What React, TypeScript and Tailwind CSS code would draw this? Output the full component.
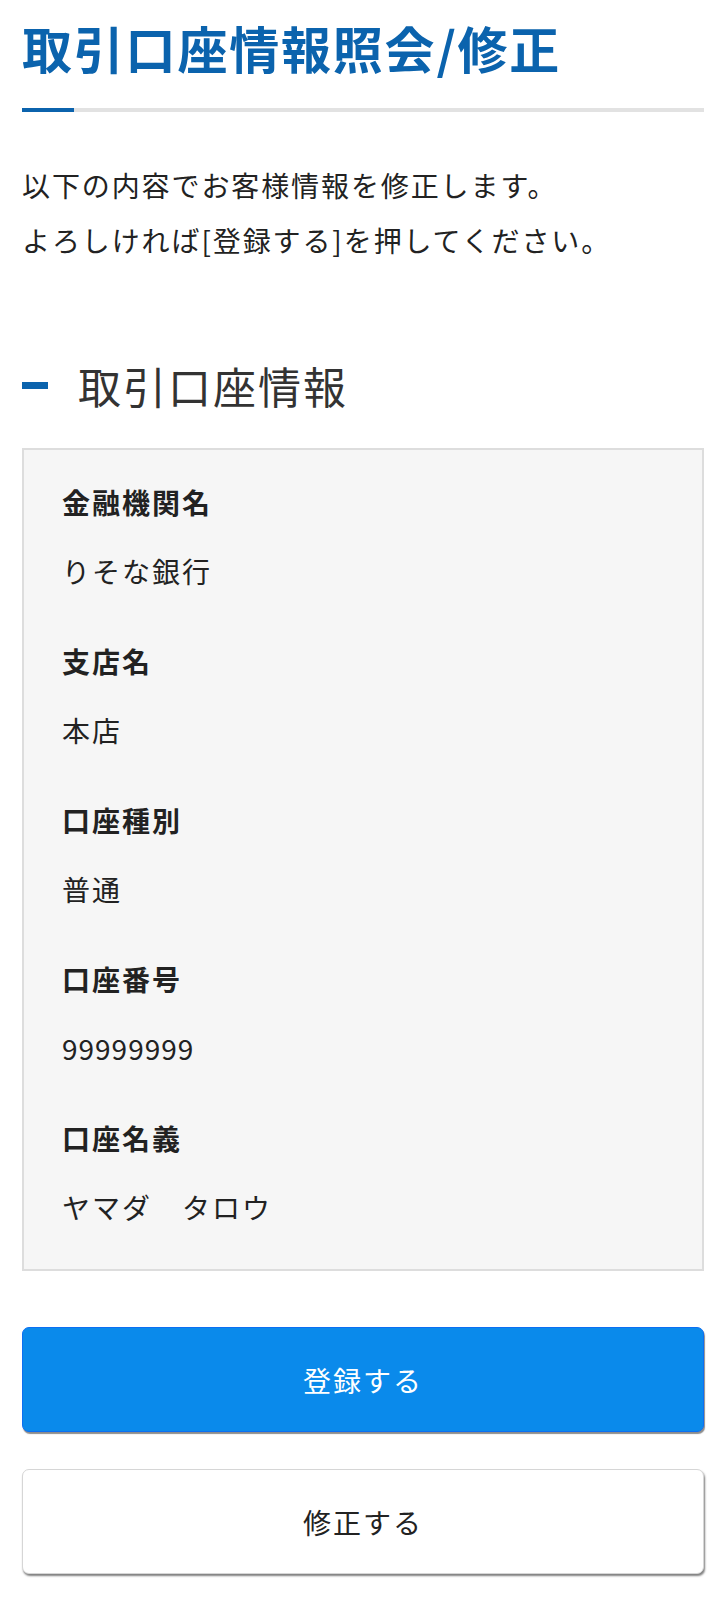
import React from "react";

const rows = [
  { label: "金融機関名", value: "りそな銀行" },
  { label: "支店名", value: "本店" },
  { label: "口座種別", value: "普通" },
  { label: "口座番号", value: "99999999", numeric: true },
  { label: "口座名義", value: "ヤマダ　タロウ" },
];

export default function App() {
  return (
    <div className="min-h-[1618px] bg-white px-[22px] text-[#222] font-['Noto_Sans_CJK_JP','Noto_Sans',sans-serif]">
      {/* Page title */}
      <h1 className="pt-[22px] text-[50px] leading-[50px] font-bold tracking-[1.8px] text-[#0b63ad]">
        取引口座情報照会/修正
      </h1>
      <div className="mt-[36px] flex h-[4px] bg-[#e2e2e2]">
        <div className="w-[52px] bg-[#0b63ad]" />
      </div>

      {/* Lead text */}
      <div className="mt-[46px] text-[28px] leading-[55px] tracking-[1.9px]">
        <p>以下の内容でお客様情報を修正します。</p>
        <p>よろしければ[登録する]を押してください。</p>
      </div>

      {/* Section heading */}
      <div className="mt-[92px] flex h-[50px] items-center">
        <span className="h-[7px] w-[26px] bg-[#0b63ad]" />
        <h2 className="ml-[30px] text-[43px] leading-[50px] font-normal tracking-[2px] text-[#333]">
          取引口座情報
        </h2>
      </div>

      {/* Account info box */}
      <div className="mt-[38px] border-2 border-[#dddddd] bg-[#f6f6f6] pt-[32px] pb-[42px] pl-[38px] pr-[20px]">
        <dl className="flex flex-col gap-[50px]">
          {rows.map((row) => (
            <div key={row.label}>
              <dt className="text-[28px] leading-[40px] font-bold tracking-[2px]">{row.label}</dt>
              <dd
                className={
                  row.numeric
                    ? "mt-[29px] text-[28px] leading-[40px] tracking-[1px]"
                    : "mt-[29px] text-[28px] leading-[40px] tracking-[2px]"
                }
              >
                {row.value}
              </dd>
            </div>
          ))}
        </dl>
      </div>

      {/* Actions */}
      <div className="mt-[56px] flex flex-col gap-[37px]">
        <button className="h-[105px] w-full rounded-[7px] border border-[#0d6ff2] bg-[#0a8aeb] text-[28px] tracking-[2px] text-white shadow-[1px_2px_1px_rgba(0,0,0,0.45)]">
          登録する
        </button>
        <button className="h-[105px] w-full rounded-[7px] border border-[#d6d6d6] bg-white text-[28px] tracking-[2px] text-[#222] shadow-[1px_2px_2px_rgba(0,0,0,0.5)]">
          修正する
        </button>
      </div>
    </div>
  );
}
